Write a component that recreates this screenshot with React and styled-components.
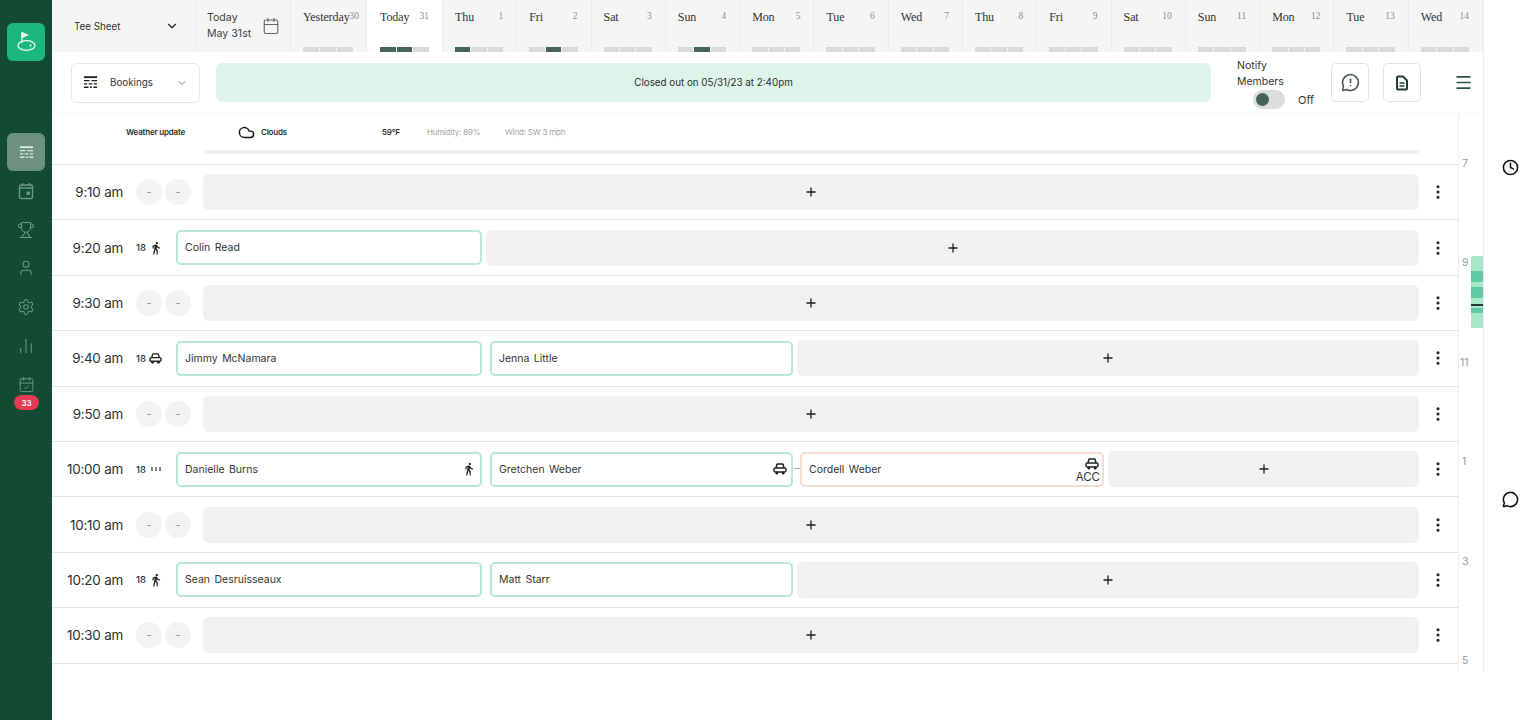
import React from 'react'
import styled, { createGlobalStyle } from 'styled-components'
import {
  BarChart2,
  Calendar,
  CalendarCheck,
  ChevronDown,
  Clock,
  Cloud,
  EllipsisVertical,
  Menu,
  MessageCircle,
  MessageCircleWarning,
  Plus,
  Settings,
  Trophy,
  User,
} from 'lucide-react'
import { MdDirectionsWalk } from 'react-icons/md'

const GlobalStyle = createGlobalStyle`
  html, body {
    margin: 0;
    padding: 0;
    height: 100%;
    background: #fff;
    overflow: hidden;
  }
  * {
    box-sizing: border-box;
  }
  body {
    font-family: Inter, "Liberation Sans", sans-serif;
    color: #2b2f2e;
  }
`

const Page = styled.div`
  display: flex;
  width: 1536px;
  height: 720px;
`

const Sidebar = styled.nav`
  flex: 0 0 52px;
  background: #134a34;
  display: flex;
  flex-direction: column;
  align-items: center;
  padding-top: 23px;
`
const LogoTile = styled.div`
  width: 38px;
  height: 38px;
  border-radius: 6px;
  background: #1cb67f;
  display: flex;
  align-items: center;
  justify-content: center;
  margin-bottom: 72px;
`
const NavItem = styled.div`
  position: relative;
  width: 38px;
  height: 38.7px;
  display: flex;
  align-items: center;
  justify-content: center;
  color: #6f9584;
  border-radius: 6px;
  background: ${(p) => (p.$active ? '#6c927f' : 'transparent')};
  ${(p) => p.$active && 'height: 38px; margin-bottom: 0.7px; color: #d8e8e0;'}
`
const Badge = styled.span`
  position: absolute;
  left: 7px;
  top: 30px;
  width: 25px;
  height: 15px;
  border-radius: 8px;
  background: #e63a52;
  color: #fff;
  font-size: 8px;
  font-weight: 600;
  display: flex;
  align-items: center;
  justify-content: center;
`

const Center = styled.div`
  flex: 0 0 1432px;
  height: 672px;
  border-right: 1px solid #ececec;
  display: flex;
  flex-direction: column;
`

const Header = styled.header`
  display: flex;
  height: 52px;
  background: #f5f5f5;
  flex: 0 0 52px;
`
const SheetSelect = styled.div`
  flex: 0 0 145px;
  display: flex;
  align-items: center;
  justify-content: space-between;
  padding: 0 17px 0 22px;
  font-size: 9.8px;
  color: #333;
  border-right: 1px solid #ececec;
`
const DateCell = styled.div`
  flex: 0 0 94px;
  display: flex;
  align-items: center;
  justify-content: space-between;
  padding: 0 10px 0 10px;
  font-size: 10.6px;
  line-height: 16px;
  color: #444;
  border-right: 1px solid #ececec;
`
const Days = styled.div`
  flex: 1;
  display: grid;
  grid-template-columns: 76px 76px repeat(14, minmax(0, 1fr));
`
const DayCell = styled.div`
  display: flex;
  flex-direction: column;
  justify-content: space-between;
  padding: 9px 13px 0 ${(p) => (p.$today ? 13 : 12)}px;
  background: ${(p) => (p.$today ? '#fff' : 'transparent')};
  border-right: 1px solid #ececec;
  font-family: "Liberation Serif", serif;
`
const DayTop = styled.div`
  display: flex;
  justify-content: space-between;
  align-items: flex-start;
`
const DayName = styled.span`
  font-size: 12px;
  line-height: 16px;
  color: #333;
  letter-spacing: -0.1px;
`
const DayNum = styled.span`
  font-size: 9.5px;
  line-height: 14px;
  color: #8c8c8c;
`
const DayBars = styled.div`
  display: flex;
  gap: 1px;
`
const DayBar = styled.span`
  flex: 1;
  height: 5px;
  background: ${(p) => (p.$on ? '#45635b' : '#d9d9d9')};
`

const Toolbar = styled.div`
  flex: 0 0 62px;
  display: flex;
  align-items: center;
  padding: 0 10px 0 19px;
  border-bottom: 1px solid #f6f6f6;
`
const BookingSelect = styled.div`
  flex: 0 0 129px;
  height: 40px;
  border: 1px solid #e8e8e8;
  border-radius: 6px;
  display: flex;
  align-items: center;
  padding: 0 11px 0 11px;
  font-size: 9.8px;
  color: #333;
  margin-right: 16px;
`
const BookingLabel = styled.span`
  flex: 1;
  margin-left: 12px;
`
const Banner = styled.div`
  flex: 1;
  height: 39px;
  border-radius: 6px;
  background: #def3e9;
  display: flex;
  align-items: center;
  justify-content: center;
  font-size: 9.8px;
  color: #2b2f2e;
  margin-right: 26px;
`
const Notify = styled.div`
  flex: 0 0 78px;
  margin-right: 16px;
  font-size: 10.5px;
  color: #333;
`
const NotifyLabel = styled.div`
  line-height: 16px;
  width: 60px;
  margin-top: 1px;
`
const ToggleRow = styled.div`
  display: flex;
  align-items: center;
  padding-left: 16px;
`
const Toggle = styled.span`
  width: 32px;
  height: 19px;
  border-radius: 10px;
  background: #dcdcdc;
  display: flex;
  align-items: center;
  padding-left: 3px;
  margin-right: 13px;
  &::before {
    content: '';
    width: 13px;
    height: 13px;
    border-radius: 50%;
    background: #45635b;
  }
`
const OffLabel = styled.span`
  font-size: 11px;
  margin-top: 2px;
`
const SquareButton = styled.button`
  width: 38px;
  height: 39px;
  padding: 0;
  border: 1.5px solid #e2e2e2;
  border-radius: 5px;
  background: #fff;
  color: #4a5653;
  display: flex;
  align-items: center;
  justify-content: center;
  margin-right: 14px;
`
const Burger = styled.div`
  margin-left: 19px;
  color: #2e4f47;
  display: flex;
`

const Content = styled.div`
  flex: 1;
  display: flex;
  min-height: 0;
`
const SheetColumn = styled.div`
  flex: 1;
  display: flex;
  flex-direction: column;
  min-width: 0;
`
const Weather = styled.div`
  flex: 0 0 36px;
  display: flex;
  align-items: center;
  padding-left: 74px;
  font-size: 8px;
  letter-spacing: -0.2px;
`
const WeatherCell = styled.span`
  flex: 0 0 ${(p) => p.$w}px;
  display: flex;
  align-items: center;
  gap: 6px;
  font-weight: ${(p) => (p.$muted ? 400 : 600)};
  color: ${(p) => (p.$muted ? '#a3a3a3' : '#2b2f2e')};
`
const CutRow = styled.div`
  flex: 0 0 15px;
  padding: 0 39px 0 152px;
  border-bottom: 1px solid #e3e3e3;
`
const CutSlot = styled.div`
  height: 4px;
  background: #f0f0f0;
  border-radius: 0 0 6px 6px;
`
const Row = styled.div`
  flex: 0 0 55.4px;
  display: flex;
  align-items: center;
  border-bottom: 1px solid #e3e3e3;
`
const Time = styled.div`
  flex: 0 0 71px;
  text-align: right;
  font-size: 13.4px;
  letter-spacing: -0.2px;
  color: #2b2f2e;
  margin-right: 13px;
`
const Meta = styled.div`
  flex: 0 0 40px;
  display: flex;
  align-items: center;
  gap: 3px;
  font-size: 9.5px;
  font-weight: 500;
`
const Dashes = styled.div`
  flex: 0 0 67px;
  display: flex;
  gap: 3px;
`
const Dash = styled.span`
  width: 26px;
  height: 26px;
  border-radius: 50%;
  background: #f3f3f3;
  color: #999;
  font-size: 11px;
  display: flex;
  align-items: center;
  justify-content: center;
`
const Slots = styled.div`
  flex: 0 0 auto;
  width: ${(p) => p.$w}px;
  display: flex;
  align-items: center;
`
const Card = styled.div`
  position: relative;
  flex: 0 0 ${(p) => p.$w}px;
  height: 35px;
  margin-left: ${(p) => p.$ml || 0}px;
  margin-right: 4px;
  padding: 0 7px;
  border: 2px solid ${(p) => (p.$warn ? '#f7dad0' : '#b9e8d7')};
  border-radius: 5px;
  display: flex;
  align-items: center;
  justify-content: space-between;
  font-size: 10.5px;
  word-spacing: 1.5px;
  color: #333;
`
const Connector = styled.span`
  position: absolute;
  left: -8px;
  top: 14px;
  width: 6px;
  height: 1.5px;
  background: #e79a83;
`
const CardRight = styled.span`
  display: flex;
  margin-right: -3px;
`
const CardIcons = styled.div`
  display: flex;
  flex-direction: column;
  align-items: flex-end;
  font-size: 11.5px;
  line-height: 12px;
  margin-right: -5px;
  margin-top: 2px;
`
const CarMark = styled.span`
  display: flex;
  margin-right: 1px;
`
const OpenSlot = styled.div`
  flex: 1;
  height: 36px;
  border-radius: 6px;
  background: #f1f1f1;
  color: #1c1c1c;
  display: flex;
  align-items: center;
  justify-content: center;
`
const Kebab = styled.div`
  flex: 0 0 38px;
  display: flex;
  justify-content: center;
  color: #1f2a27;
`

const Minimap = styled.aside`
  position: relative;
  flex: 0 0 25px;
  border-left: 1px solid #ececec;
  padding-top: 41px;
  overflow: hidden;
`
const Hour = styled.div`
  height: 99.4px;
  font-size: 10.5px;
  line-height: 18px;
  color: #999;
  padding-left: ${(p) => (p.$wide ? 1 : 3)}px;
`
const Usage = styled.div`
  position: absolute;
  top: 142px;
  right: 0;
  width: 12px;
  height: 72px;
  background: #a9e6cd;
`
const UsageMark = styled.span`
  position: absolute;
  left: 0;
  right: 0;
  background: ${(p) => p.$c};
`

const Rail = styled.aside`
  flex: 1;
  height: 672px;
  display: flex;
  flex-direction: column;
  align-items: center;
  padding: 159px 0 0 0;
  color: #111;
`
const RailGap = styled.div`
  height: 315px;
`

const LogoIcon = () => (
  <svg width="22" height="22" viewBox="0 0 22 22" fill="none" stroke="#e8f7f0" strokeWidth="1.3">
    <ellipse cx="11.5" cy="14.5" rx="8.5" ry="4.8" />
    <path d="M7 12V1.5" />
    <path d="M7 1.5l5.5 2.4L7 6.3z" fill="#e8f7f0" />
    <circle cx="15.5" cy="14.5" r="1.1" fill="#e8f7f0" stroke="none" />
  </svg>
)

const SheetIcon = ({ size = 16, color = 'currentColor' }) => (
  <svg width={size} height={size} viewBox="0 0 16 16" fill="none" stroke={color} strokeWidth="1.5">
    <path d="M1 2.3h14" strokeWidth="2" />
    <path d="M1 6h6M9 6h6M1 9.5h3.5M6 9.5h4M11.5 9.5h3.5M1 13h5M7.5 13h2M11 13h4" />
  </svg>
)

const CalendarDot = (props) => (
  <svg width="16" height="18" viewBox="0 0 16 18" fill="none" stroke="currentColor" strokeWidth="1.4" {...props}>
    <rect x="1.5" y="3" width="13" height="13.5" rx="1.5" />
    <path d="M4.5 1v3M11.5 1v3M1.5 6h13" />
    <rect x="8.5" y="9.5" width="3.5" height="3.5" fill="currentColor" stroke="none" />
  </svg>
)

const Ticks = () => (
  <svg width="13" height="6" viewBox="0 0 13 6" fill="none" stroke="#333" strokeWidth="1.2">
    <path d="M3 1v4M7 1v4M11 1v4" />
  </svg>
)

const CarIcon = ({ size = 14 }) => (
  <svg width={size} height={size} viewBox="0 0 14 14" fill="none" stroke="#222" strokeWidth="1.5">
    <path d="M3 6l.8-3.2c.1-.5.5-.8 1-.8h4.4c.5 0 .9.3 1 .8L11 6" />
    <rect x="1" y="6" width="12" height="4" rx="1.4" />
    <circle cx="3.8" cy="11.1" r="1.5" fill="#222" stroke="none" />
    <circle cx="10.2" cy="11.1" r="1.5" fill="#222" stroke="none" />
  </svg>
)

const DocIcon = () => (
  <svg width="14" height="16" viewBox="0 0 14 16" fill="none" stroke="#1f3d36" strokeWidth="2">
    <path d="M2 2.5c0-.6.4-1 1-1h5l4 4v8c0 .6-.4 1-1 1H3c-.6 0-1-.4-1-1z" strokeLinejoin="round" />
    <path d="M4.5 8h5M4.5 11h5" strokeWidth="1.4" />
  </svg>
)

const days = [
  ['Yesterday', 30, -1],
  ['Today', 31, [0, 1]],
  ['Thu', 1, [0]],
  ['Fri', 2, [1]],
  ['Sat', 3, []],
  ['Sun', 4, [1]],
  ['Mon', 5, []],
  ['Tue', 6, []],
  ['Wed', 7, []],
  ['Thu', 8, []],
  ['Fri', 9, []],
  ['Sat', 10, []],
  ['Sun', 11, []],
  ['Mon', 12, []],
  ['Tue', 13, []],
  ['Wed', 14, []],
]

const walk = <MdDirectionsWalk size={14} color="#222" />
const car = <CarIcon />
const metaCar = <CarIcon size={13} />
const ticks = <Ticks />

const rows = [
  { time: '9:10 am' },
  { time: '9:20 am', icon: walk, cards: [{ name: 'Colin Read', w: 306 }] },
  { time: '9:30 am' },
  {
    time: '9:40 am',
    icon: metaCar,
    cards: [
      { name: 'Jimmy McNamara', w: 306 },
      { name: 'Jenna Little', w: 303, ml: 4 },
    ],
  },
  { time: '9:50 am' },
  {
    time: '10:00 am',
    icon: ticks,
    cards: [
      { name: 'Danielle Burns', w: 306, right: walk },
      { name: 'Gretchen Weber', w: 303, ml: 4, right: car },
      { name: 'Cordell Weber', w: 304, ml: 3, warn: true, right: car, acc: true },
    ],
  },
  { time: '10:10 am' },
  {
    time: '10:20 am',
    icon: walk,
    cards: [
      { name: 'Sean Desruisseaux', w: 306 },
      { name: 'Matt Starr', w: 303, ml: 4 },
    ],
  },
  { time: '10:30 am' },
]

const navIcons = [
  <CalendarDot key="cal" />,
  <Trophy key="trophy" size={18} strokeWidth={1.4} />,
  <User key="user" size={18} strokeWidth={1.4} />,
  <Settings key="gear" size={18} strokeWidth={1.4} />,
  <BarChart2 key="chart" size={18} strokeWidth={1.4} />,
]

const TeeRow = ({ row }) => {
  const booked = Boolean(row.cards)
  return (
    <Row>
      <Time>{row.time}</Time>
      {booked ? (
        <Meta>
          18 {row.icon}
        </Meta>
      ) : (
        <Dashes>
          <Dash>-</Dash>
          <Dash>-</Dash>
        </Dashes>
      )}
      <Slots $w={booked ? 1243 : 1216}>
        {(row.cards || []).map((c) => (
          <Card key={c.name} $w={c.w} $ml={c.ml} $warn={c.warn}>
            {c.warn && <Connector />}
            <span>{c.name}</span>
            {c.acc ? (
              <CardIcons>
                <CarMark>{c.right}</CarMark>
                <span>ACC</span>
              </CardIcons>
            ) : (
              c.right && <CardRight>{c.right}</CardRight>
            )}
          </Card>
        ))}
        <OpenSlot>
          <Plus size={14} strokeWidth={2.2} />
        </OpenSlot>
      </Slots>
      <Kebab>
        <EllipsisVertical size={18} strokeWidth={2.2} />
      </Kebab>
    </Row>
  )
}

const App = () => {
  return (
    <Page>
      <GlobalStyle />
      <Sidebar>
        <LogoTile>
          <LogoIcon />
        </LogoTile>
        <NavItem $active>
          <SheetIcon size={15} />
        </NavItem>
        {navIcons.map((icon) => (
          <NavItem key={icon.key}>{icon}</NavItem>
        ))}
        <NavItem>
          <CalendarCheck size={17} strokeWidth={1.4} />
          <Badge>33</Badge>
        </NavItem>
      </Sidebar>

      <Center>
        <Header>
          <SheetSelect>
            Tee Sheet
            <ChevronDown size={14} color="#222" />
          </SheetSelect>
          <DateCell>
            <div>
              Today
              <br />
              May 31st
            </div>
            <Calendar size={18} color="#666" strokeWidth={1.5} />
          </DateCell>
          <Days>
            {days.map(([name, num, on]) => (
              <DayCell key={name + num} $today={name === 'Today'}>
                <DayTop>
                  <DayName>{name}</DayName>
                  <DayNum>{num}</DayNum>
                </DayTop>
                <DayBars>
                  {[0, 1, 2].map((i) => (
                    <DayBar key={i} $on={Array.isArray(on) && on.includes(i)} />
                  ))}
                </DayBars>
              </DayCell>
            ))}
          </Days>
        </Header>

        <Toolbar>
          <BookingSelect>
            <SheetIcon size={15} color="#222" />
            <BookingLabel>Bookings</BookingLabel>
            <ChevronDown size={12} color="#888" />
          </BookingSelect>
          <Banner>Closed out on 05/31/23 at 2:40pm</Banner>
          <Notify>
            <NotifyLabel>Notify Members</NotifyLabel>
            <ToggleRow>
              <Toggle />
              <OffLabel>Off</OffLabel>
            </ToggleRow>
          </Notify>
          <SquareButton>
            <MessageCircleWarning size={19} strokeWidth={2} />
          </SquareButton>
          <SquareButton>
            <DocIcon />
          </SquareButton>
          <Burger>
            <Menu size={19} strokeWidth={2.2} />
          </Burger>
        </Toolbar>

        <Content>
          <SheetColumn>
            <Weather>
              <WeatherCell $w={112}>Weather update</WeatherCell>
              <WeatherCell $w={144}>
                <Cloud size={17} color="#111" strokeWidth={2} />
                Clouds
              </WeatherCell>
              <WeatherCell $w={45}>59°F</WeatherCell>
              <WeatherCell $w={78} $muted>Humidity: 69%</WeatherCell>
              <WeatherCell $w={80} $muted>Wind: SW 3 mph</WeatherCell>
            </Weather>
            <CutRow>
              <CutSlot />
            </CutRow>
            {rows.map((row) => (
              <TeeRow key={row.time} row={row} />
            ))}
          </SheetColumn>
          <Minimap>
            <Hour>7</Hour>
            <Hour>9</Hour>
            <Hour $wide>11</Hour>
            <Hour>1</Hour>
            <Hour>3</Hour>
            <Hour>5</Hour>
            <Usage>
              <UsageMark $c="#62c9a5" style={{ top: 15, height: 11 }} />
              <UsageMark $c="#62c9a5" style={{ top: 31, height: 11 }} />
              <UsageMark $c="#1f3d33" style={{ top: 48, height: 2 }} />
              <UsageMark $c="#62c9a5" style={{ top: 52, height: 5 }} />
            </Usage>
          </Minimap>
        </Content>
      </Center>

      <Rail>
        <Clock size={17} strokeWidth={2.2} />
        <RailGap />
        <MessageCircle size={17} strokeWidth={2.2} />
      </Rail>
    </Page>
  )
}

export default App
